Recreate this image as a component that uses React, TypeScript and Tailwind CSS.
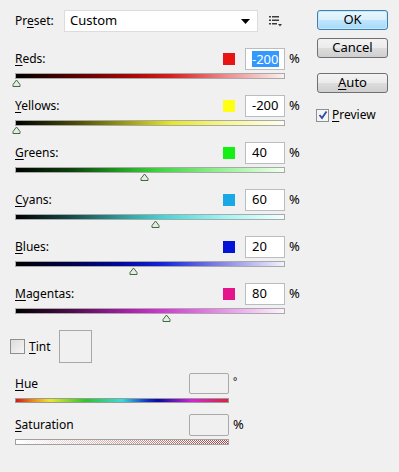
import React from "react";

interface Channel {
  key: string;
  lead: string;
  rest: string;
  value: number;
  swatch: string;
  gradient: string;
  selected?: boolean;
}

const channels: Channel[] = [
  {
    key: "reds",
    lead: "R",
    rest: "eds:",
    value: -200,
    swatch: "bg-[#e81414]",
    gradient:
      "bg-[linear-gradient(to_right,#000_0%,#5a0000_22%,#b00808_45%,#d82020_58%,#ec8a8a_78%,#fcf0f0_100%)]",
    selected: true,
  },
  {
    key: "yellows",
    lead: "Y",
    rest: "ellows:",
    value: -200,
    swatch: "bg-[#ffff14]",
    gradient:
      "bg-[linear-gradient(to_right,#000_0%,#4a4a08_22%,#a0a018_42%,#e6e62a_58%,#f6f690_78%,#fefef2_100%)]",
  },
  {
    key: "greens",
    lead: "G",
    rest: "reens:",
    value: 40,
    swatch: "bg-[#14f014]",
    gradient:
      "bg-[linear-gradient(to_right,#000_0%,#0c400c_20%,#1e9a1e_38%,#3ad23a_52%,#8ef08e_75%,#f2fff2_100%)]",
  },
  {
    key: "cyans",
    lead: "C",
    rest: "yans:",
    value: 60,
    swatch: "bg-[#18a8e6]",
    gradient:
      "bg-[linear-gradient(to_right,#000_0%,#164848_20%,#2e9e9e_40%,#44d6d6_55%,#a2f4f4_78%,#f2ffff_100%)]",
  },
  {
    key: "blues",
    lead: "B",
    rest: "lues:",
    value: 20,
    swatch: "bg-[#0414d6]",
    gradient:
      "bg-[linear-gradient(to_right,#000_0%,#000048_20%,#0008a0_40%,#1626dc_55%,#8c8ce4_78%,#f2f2ff_100%)]",
  },
  {
    key: "magentas",
    lead: "M",
    rest: "agentas:",
    value: 80,
    swatch: "bg-[#e4148a]",
    gradient:
      "bg-[linear-gradient(to_right,#000_0%,#4a0c4a_20%,#a41ca4_40%,#d23ad2_55%,#e896e8_78%,#fff2ff_100%)]",
  },
];

const Thumb = () => (
  <svg width="9" height="8" viewBox="0 0 9 8">
    <path
      d="M1 7.5 L1 5.5 L4.5 1 L8 5.5 L8 7.5 Z"
      fill="#e4ece4"
      stroke="#3f6a3f"
      strokeWidth="1"
    />
  </svg>
);

const SliderRow = ({ c }: { c: Channel }) => {
  const center = 1 + ((c.value + 200) / 500) * 268;
  return (
    <div className="mb-[8px]">
      <div className="flex h-[22px] w-[286px] items-center">
        <span className="flex-1">
          <u className="underline-offset-2">{c.lead}</u>
          {c.rest}
        </span>
        <span className={`mr-[10px] h-[12px] w-[12px] ${c.swatch}`} />
        <div className="flex h-[22px] w-[40px] items-center border border-[#b9bcc2] bg-white pl-[6px] text-[13px]">
          {c.selected ? (
            <span className="bg-[#3399ff] leading-[16px] text-white">{c.value}</span>
          ) : (
            <span>{c.value}</span>
          )}
        </div>
        <span className="ml-[4px] w-[12px] text-[13px]">%</span>
      </div>
      <div className={`mt-[3px] h-[6px] w-[270px] border border-[#a9a9a9] ${c.gradient}`} />
      <div className="h-[8px]">
        <div style={{ marginLeft: center - 4.5 }} className="w-[9px]">
          <Thumb />
        </div>
      </div>
    </div>
  );
};

const PresetIcon = () => (
  <svg width="14" height="12" viewBox="0 0 14 12">
    <g fill="#3c3c3c">
      <rect x="0" y="1" width="2" height="1.5" />
      <rect x="3" y="1" width="7" height="1.5" />
      <rect x="0" y="4.5" width="2" height="1.5" />
      <rect x="3" y="4.5" width="7" height="1.5" />
      <rect x="0" y="8" width="2" height="1.5" />
      <rect x="3" y="8" width="5" height="1.5" />
      <path d="M9 9 L13 9 L11 11.5 Z" />
    </g>
  </svg>
);

const winButton =
  "flex h-[20px] w-[71px] items-center justify-center rounded-[3px] border border-[#707070] bg-[linear-gradient(to_bottom,#f3f3f3_0%,#ebebeb_50%,#dddddd_51%,#cfcfcf_100%)] text-[13px]";

export default function App() {
  return (
    <div className="flex h-[472px] w-[399px] bg-[#f0f0f0] font-['Noto_Sans',sans-serif] text-[12px] text-black">
      <div className="w-[317px] pl-[15px] pt-[10px]">
        <div className="flex h-[22px] items-center">
          <span className="w-[49px]">
            Pr<u className="underline-offset-2">e</u>set:
          </span>
          <div className="flex h-[22px] w-[194px] items-center justify-between border border-[#dcdcdc] bg-white pl-[5px] pr-[7px] text-[13px]">
            <span>Custom</span>
            <svg width="9" height="5" viewBox="0 0 9 5">
              <path d="M0 0 L9 0 L4.5 5 Z" fill="#000" />
            </svg>
          </div>
          <span className="ml-[11px] flex">
            <PresetIcon />
          </span>
        </div>

        <div className="mt-[16px]">
          {channels.map((c) => (
            <SliderRow key={c.key} c={c} />
          ))}
        </div>

        <div className="-ml-[5px] mt-[1px] flex h-[33px] items-center">
          <span className="h-[15px] w-[15px] border border-[#8e8f8f] bg-[linear-gradient(135deg,#dcdcdc,#f6f6f6)]" />
          <span className="w-[34px] pl-[4px]">
            <u className="underline-offset-2">T</u>int
          </span>
          <span className="h-[33px] w-[33px] border border-[#a8a8a8]" />
        </div>

        <div className="mt-[10px] flex h-[21px] w-[230px] items-center">
          <span className="flex-1">
            <u className="underline-offset-2">H</u>ue
          </span>
          <span className="h-[21px] w-[40px] rounded-[2px] border border-[#aaaaaa]" />
          <span className="ml-[4px] w-[12px] self-start text-[10px] leading-[16px]">°</span>
        </div>
        <div className="mt-[4px] h-[5px] w-[214px] border border-[#9a9a9a] bg-[linear-gradient(to_right,#d81818_0%,#ee8a14_8%,#ece82a_16%,#28c828_33%,#34dede_50%,#1030c8_62%,#0a0aa8_67%,#d624d6_83%,#e02040_100%)]" />

        <div className="mt-[11px] flex h-[22px] w-[230px] items-center">
          <span className="flex-1">
            <u className="underline-offset-2">S</u>aturation
          </span>
          <span className="h-[22px] w-[40px] rounded-[2px] border border-[#aaaaaa]" />
          <span className="ml-[4px] w-[12px] text-[13px]">%</span>
        </div>
        <div className="mt-[3px] h-[6px] w-[214px] border border-[#a0a0a0] bg-[image:repeating-conic-gradient(#fff_0_25%,transparent_0_50%),linear-gradient(to_right,#ffffff,#a84040)] bg-[length:2px_2px,100%_100%]" />
      </div>

      <div className="flex flex-col pt-[10px]">
        <button className="flex h-[20px] w-[71px] items-center justify-center rounded-[3px] border border-[#3c7fb1] bg-[linear-gradient(to_bottom,#eaf6fd_0%,#d9f0fc_50%,#bee6fd_51%,#a7d9f5_100%)] text-[13px] shadow-[inset_0_0_0_1px_#c4e8fa]">
          OK
        </button>
        <button className={`mt-[8px] ${winButton}`}>Cancel</button>
        <button className={`mt-[15px] ${winButton}`}>
          <span>
            <u className="underline-offset-2">A</u>uto
          </span>
        </button>
        <div className="-ml-[1px] mt-[13px] flex items-center">
          <span className="flex h-[13px] w-[13px] items-center justify-center border border-[#8e8f8f] bg-[#f4f4f4]">
            <svg width="10" height="10" viewBox="0 0 10 10">
              <path d="M1.5 5 L4 8 L8.5 1.5" fill="none" stroke="#2a4aa8" strokeWidth="1.8" />
            </svg>
          </span>
          <span className="ml-[3px] text-[12px]">
            <u className="underline-offset-2">P</u>review
          </span>
        </div>
      </div>
    </div>
  );
}
